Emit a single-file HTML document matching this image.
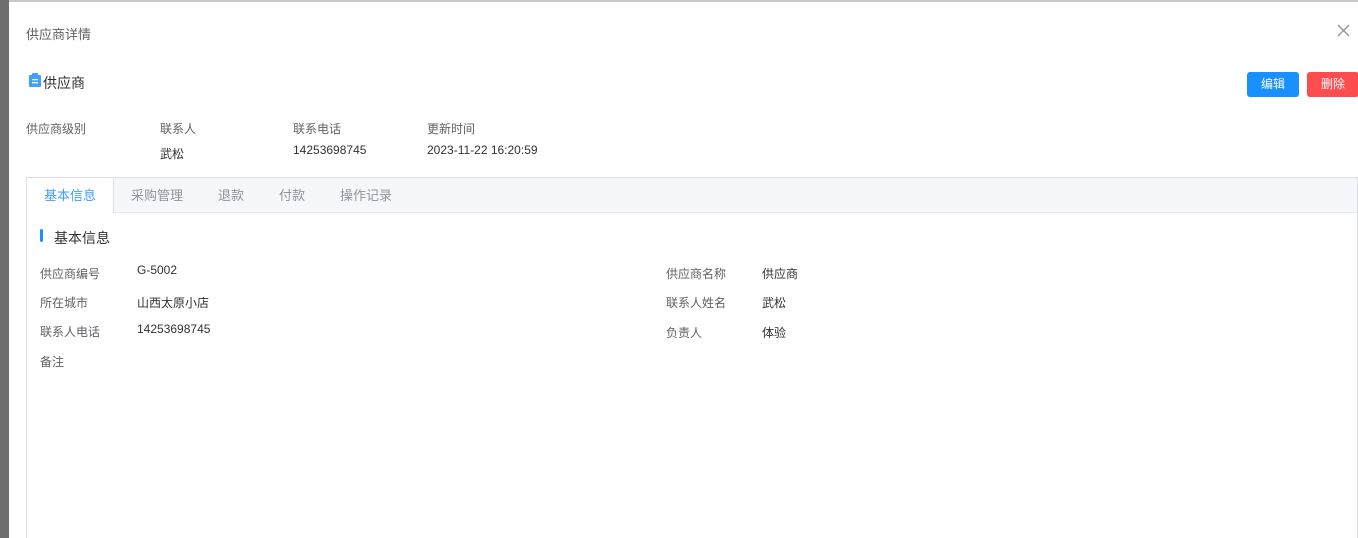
<!DOCTYPE html>
<html style="width:1358px;height:538px;overflow:hidden"><head><meta charset="utf-8"><style>
*{margin:0;padding:0;box-sizing:border-box}
body{width:1358px;height:538px;overflow:hidden;background:#fff;font-family:"Liberation Sans","Noto Sans CJK SC",sans-serif;position:relative;font-size:12px;color:#606266}
.strip{position:absolute;left:0;top:0;width:9px;height:538px;background:#6e6e6e}
.dlg{position:absolute;left:9px;top:0;right:0;bottom:0;background:#fff;border-top:2px solid #c8c8c8}
.a{position:absolute;white-space:nowrap}
.btn{position:absolute;top:72px;height:25px;width:52px;border-radius:3px;color:#fff;font-size:12px;text-align:center;line-height:25px}
.box{position:absolute;left:26px;top:177px;width:1332px;height:370px;border:1px solid #dcdfe6;border-bottom:none}
.tabs{height:35px;background:#f5f7fa;border-bottom:1px solid #e4e7ed;position:relative}
.tab{position:absolute;top:0;height:35px;line-height:35px;font-size:13px;color:#909399}
.lbl{color:#606266;font-size:12px}
.val{color:#303133;font-size:12px}
</style></head><body>
<div class="strip"></div>
<div class="dlg"></div>
<div class="a" style="left:26px;top:24px;font-size:13px;color:#606266">供应商详情</div>
<svg class="a" style="left:1337px;top:24px" width="13" height="13" viewBox="0 0 13 13"><path d="M1 1L12 12M12 1L1 12" stroke="#909399" stroke-width="1.3"/></svg>
<svg class="a" style="left:29px;top:73px" width="12" height="14" viewBox="0 0 12 14"><rect x="0" y="2" width="12" height="12" rx="1.5" fill="#409eff"/><rect x="3" y="0" width="6" height="3.5" rx="1" fill="#409eff"/><rect x="3" y="6" width="6" height="1.3" fill="#fff"/><rect x="3" y="9" width="6" height="1.3" fill="#fff"/></svg>
<div class="a" style="left:43px;top:73px;font-size:14px;color:#303133">供应商</div>
<div class="btn" style="left:1247px;background:#1890ff">编辑</div>
<div class="btn" style="left:1307px;background:#ff4d4f">删除</div>
<div class="a lbl" style="left:26px;top:120px">供应商级别</div>
<div class="a lbl" style="left:160px;top:120px">联系人</div>
<div class="a lbl" style="left:293px;top:120px">联系电话</div>
<div class="a lbl" style="left:427px;top:120px">更新时间</div>
<div class="a val" style="left:160px;top:145px">武松</div>
<div class="a val" style="left:293px;top:143px">14253698745</div>
<div class="a val" style="left:427px;top:143px">2023-11-22 16:20:59</div>
<div class="box"><div class="tabs">
<div class="tab" style="left:0;width:87px;background:#fff;color:#409eff;text-align:center;height:36px;border-right:1px solid #dcdfe6">基本信息</div>
<div class="tab" style="left:104px">采购管理</div>
<div class="tab" style="left:191px">退款</div>
<div class="tab" style="left:252px">付款</div>
<div class="tab" style="left:313px">操作记录</div>
</div></div>
<div class="a" style="left:40px;top:229px;width:3px;height:13px;background:#1890ff;border-radius:2px"></div>
<div class="a" style="left:54px;top:228px;font-size:14px;color:#303133">基本信息</div>
<div class="a lbl" style="left:40px;top:265px">供应商编号</div>
<div class="a val" style="left:137px;top:263px">G-5002</div>
<div class="a lbl" style="left:40px;top:294px">所在城市</div>
<div class="a val" style="left:137px;top:294px">山西太原小店</div>
<div class="a lbl" style="left:40px;top:323px">联系人电话</div>
<div class="a val" style="left:137px;top:322px">14253698745</div>
<div class="a lbl" style="left:40px;top:353px">备注</div>
<div class="a lbl" style="left:666px;top:265px">供应商名称</div>
<div class="a val" style="left:762px;top:265px">供应商</div>
<div class="a lbl" style="left:666px;top:294px">联系人姓名</div>
<div class="a val" style="left:762px;top:294px">武松</div>
<div class="a lbl" style="left:666px;top:324px">负责人</div>
<div class="a val" style="left:762px;top:324px">体验</div>
</body></html>
